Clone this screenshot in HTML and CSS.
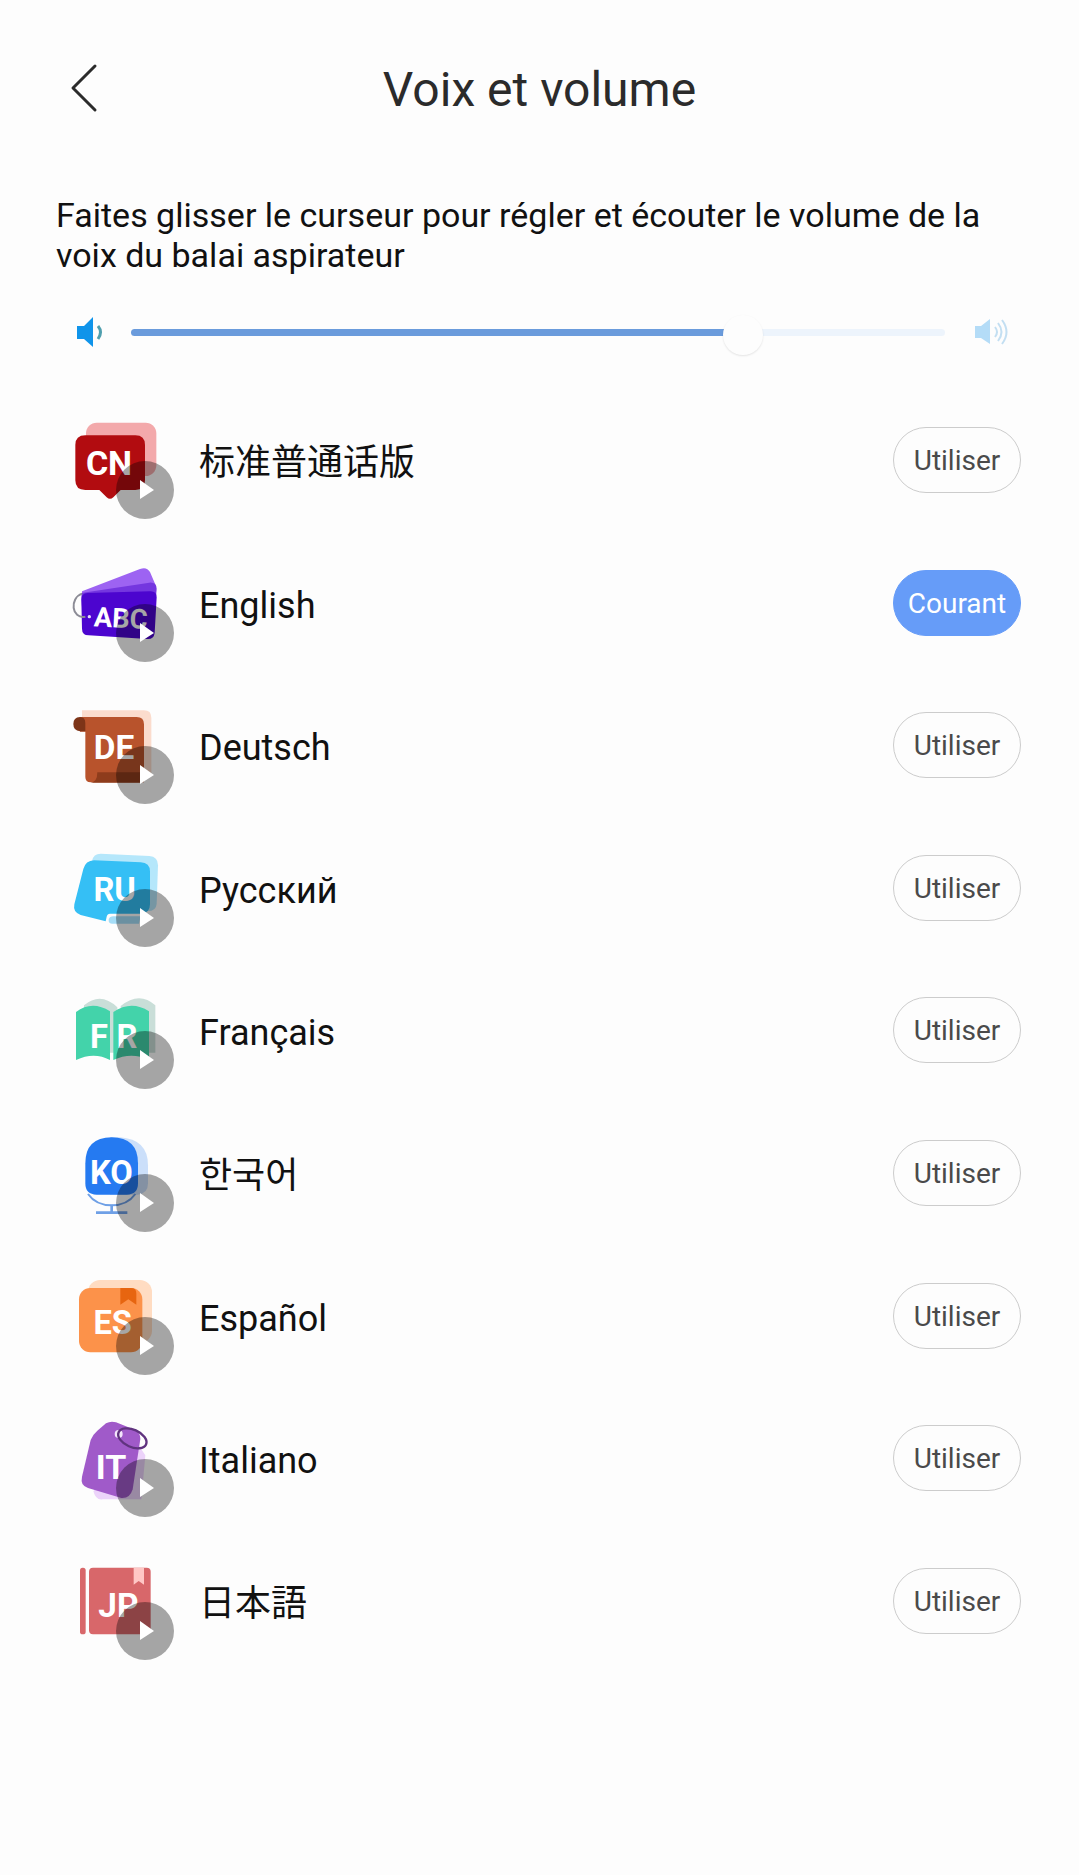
FILE: index.html
```html
<!DOCTYPE html>
<html lang="fr">
<head>
<meta charset="utf-8">
<meta name="viewport" content="width=device-width, initial-scale=1">
<title>Voix et volume</title>
<link rel="stylesheet" href="styles.css">
</head>
<body>
<header class="topbar">
  <button class="back" type="button" aria-label="Retour">
    <svg width="30" height="50" viewBox="0 0 30 50"><path d="M27 3 5 25 27 47" fill="none" stroke="#2b2b2b" stroke-width="3" stroke-linecap="round" stroke-linejoin="round"/></svg>
  </button>
  <h1 class="title">Voix et volume</h1>
</header>
<main>
  <section class="volume">
    <label class="hint" for="volume">Faites glisser le curseur pour régler et écouter le volume de la voix du balai aspirateur</label>
    <div class="slider-row">
      <svg class="speaker" width="28" height="30" viewBox="0 0 28 30"><path d="M1 9h7l9-9v30l-9-8H1z" fill="#0f94ea"/><path d="M22 9q5 6 0 13" fill="none" stroke="#4f9fae" stroke-width="3"/></svg>
      <input class="slider" id="volume" type="range" min="0" max="1000" value="765">
      <svg class="speaker" width="34" height="30" viewBox="0 0 34 30"><path d="M0 9h6l9-7v25l-9-6H0z" fill="#b4dcf7"/><path d="M20 10q4 5 0 10M23 6q7 9 0 18M27 3q9 12 0 24" fill="none" stroke="#c3dff2" stroke-width="2"/></svg>
    </div>
  </section>
  <ul class="voices">
    <li class="voice">
      <div class="art">
        <svg class="picture" viewBox="0 -30 390 360">
          <rect x="78" y="38" width="211" height="160" rx="32" fill="#f3a9ab"/>
          <path d="M76 76H226q29 0 29 29V211q0 29-29 29H182L160 262q-10 9-20 0L118 240H76q-30 0-30-29V105q0-29 30-29Z" fill="#b20c10"/>
          <text class="code" x="147" y="194" font-size="102">CN</text>
        </svg>
        <button class="play" type="button" aria-label="Écouter 标准普通话版"><svg class="play-icon" viewBox="0 0 58 58"><path d="M24 19 38 29 24 38Z"/></svg></button>
      </div>
      <span class="name" lang="zh">标准普通话版</span>
      <button class="use" type="button">Utiliser</button>
    </li>
    <li class="voice">
      <div class="art">
        <svg class="picture" viewBox="0 -37 390 360">
          <path d="M66 108 240 41q20-8 30 9l18 42-10 90-210 0Z" fill="#9d63f2"/>
          <path d="M64 113 268 82q21-2 22 18l-8 100-214 0Z" fill="#7436df"/>
          <path d="M82 113 272 108q18 0 18 18L284 232q-2 20-22 19L86 240q-20-1-20-20L64 132q0-18 18-19Z" fill="#4c05cf"/>
          <path d="M66 115C28 128 34 192 76 184" fill="none" stroke="#8c8c96" stroke-width="6"/>
          <circle cx="88" cy="184" r="5" fill="#e8dcff"/>
          <text class="code" x="182" y="217" font-size="82" transform="rotate(3 182 190)">ABC</text>
        </svg>
        <button class="play" type="button" aria-label="Écouter English"><svg class="play-icon" viewBox="0 0 58 58"><path d="M24 19 38 29 24 38Z"/></svg></button>
      </div>
      <span class="name" lang="en">English</span>
      <button class="use use-current" type="button" aria-pressed="true">Courant</button>
    </li>
    <li class="voice">
      <div class="art">
        <svg class="picture" viewBox="0 -30 390 360">
          <path d="M66 46H252q22 0 22 22V240H90V88H66Z" fill="#fbdccd"/>
          <path d="M60 66H230q22 0 22 22V262H92q-16 0-16-16V110H60Z" fill="#b8532c"/>
          <path d="M60 66q16 0 16 18v25H60q-20-2-20-22t20-21Z" fill="#7d3418"/>
          <path d="M112 232H262q0 30-22 31H92q20-2 20-31Z" fill="#8e3c1c"/>
          <text class="code" x="162" y="191" font-size="100">DE</text>
        </svg>
        <button class="play" type="button" aria-label="Écouter Deutsch"><svg class="play-icon" viewBox="0 0 58 58"><path d="M24 19 38 29 24 38Z"/></svg></button>
      </div>
      <span class="name" lang="de">Deutsch</span>
      <button class="use" type="button">Utiliser</button>
    </li>
    <li class="voice">
      <div class="art">
        <svg class="picture" viewBox="0 -37 390 360">
          <path d="M122 40 268 47q26 2 26 28L290 190q-2 22-26 22L100 190 96 62Q100 40 122 40Z" fill="#b5e7fb"/>
          <path d="M102 60 242 66q28 1 28 28V192q0 28-28 28H150q-8 0-10 9l-3 14L62 224q-24-8-19-32L70 86q7-25 32-26Z" fill="#35bff5"/>
          <path d="M146 238q3-10 14-10h82l-5 22h-80q-12 0-11-12Z" fill="#a5ddf7"/>
          <text class="code" x="164" y="181" font-size="98">RU</text>
        </svg>
        <button class="play" type="button" aria-label="Écouter Русский"><svg class="play-icon" viewBox="0 0 58 58"><path d="M24 19 38 29 24 38Z"/></svg></button>
      </div>
      <span class="name" lang="ru">Русский</span>
      <button class="use" type="button">Utiliser</button>
    </li>
    <li class="voice">
      <div class="art">
        <svg class="picture" viewBox="0 -44 390 360">
          <path d="M72 62q50-42 100 6V204H72ZM182 64q56-46 104-2V204H182Z" fill="#c9ded8"/>
          <path d="M48 82q48-36 102-2V226q-48-26-102 0Z" fill="#43d3aa"/>
          <path d="M160 82q54-36 107-2V226q-52-26-107 0Z" fill="#43d3aa"/>
          <text class="code" x="117" y="189" font-size="98">F</text>
          <text class="code" x="201" y="189" font-size="98">R</text>
        </svg>
        <button class="play" type="button" aria-label="Écouter Français"><svg class="play-icon" viewBox="0 0 58 58"><path d="M24 19 38 29 24 38Z"/></svg></button>
      </div>
      <span class="name" lang="fr">Français</span>
      <button class="use" type="button">Utiliser</button>
    </li>
    <li class="voice">
      <div class="art">
        <svg class="picture" viewBox="0 -37 390 360">
          <path d="M150 36h30q84 6 84 84v54q0 32-32 34H150Z" fill="#cbdffa"/>
          <path d="M76 114q0-77 79-78 79 1 79 78v60q0 34-34 34H110q-34 0-34-34Z" fill="#257af1"/>
          <path d="M84 206q24 34 71 34t71-34" fill="none" stroke="#6fa0e6" stroke-width="6"/>
          <path d="M155 238v24M108 262h94" stroke="#6fa0e6" stroke-width="8"/>
          <text class="code" x="154" y="177" font-size="98">KO</text>
        </svg>
        <button class="play" type="button" aria-label="Écouter 한국어"><svg class="play-icon" viewBox="0 0 58 58"><path d="M24 19 38 29 24 38Z"/></svg></button>
      </div>
      <span class="name" lang="ko">한국어</span>
      <button class="use" type="button">Utiliser</button>
    </li>
    <li class="voice">
      <div class="art">
        <svg class="picture" viewBox="0 -44 390 360">
          <rect x="84" y="28" width="192" height="188" rx="36" fill="#ffdcc2"/>
          <rect x="57" y="52" width="190" height="193" rx="34" fill="#fc924a"/>
          <path d="M181 52h32q16 0 16 16v34l-24-16-24 16Z" fill="#e76510"/>
          <text class="code" x="158" y="190" font-size="98">ES</text>
        </svg>
        <button class="play" type="button" aria-label="Écouter Español"><svg class="play-icon" viewBox="0 0 58 58"><path d="M24 19 38 29 24 38Z"/></svg></button>
      </div>
      <span class="name" lang="es">Español</span>
      <button class="use" type="button">Utiliser</button>
    </li>
    <li class="voice">
      <div class="art">
        <svg class="picture" viewBox="0 -36 390 360">
          <path d="M232 100 256 136 244 268H128q-20 4-28-24Z" fill="#ecd3fa"/>
          <path d="M138 40q14-8 30-3l56 22q18 10 17 28L218 238q-8 28-34 26L84 234q-24-8-18-34L92 90q6-16 20-28Z" fill="#a05ac9"/>
          <circle cx="176" cy="72" r="12" fill="#f3e5fb"/>
          <ellipse cx="217" cy="85" rx="45" ry="26" transform="rotate(24 217 85)" fill="none" stroke="#60337f" stroke-width="7"/>
          <text class="code" x="153" y="206" font-size="102">IT</text>
        </svg>
        <button class="play" type="button" aria-label="Écouter Italiano"><svg class="play-icon" viewBox="0 0 58 58"><path d="M24 19 38 29 24 38Z"/></svg></button>
      </div>
      <span class="name" lang="it">Italiano</span>
      <button class="use" type="button">Utiliser</button>
    </li>
    <li class="voice">
      <div class="art">
        <svg class="picture" viewBox="0 -44 390 360">
          <rect x="60" y="36" width="17" height="200" rx="8" fill="#d8676a"/>
          <rect x="87" y="36" width="185" height="200" rx="12" fill="#d8676a"/>
          <path d="M221 36h31v51l-16-11-15 11Z" fill="#ffc7c5"/>
          <text class="code" x="175" y="185" font-size="100">JP</text>
        </svg>
        <button class="play" type="button" aria-label="Écouter 日本語"><svg class="play-icon" viewBox="0 0 58 58"><path d="M24 19 38 29 24 38Z"/></svg></button>
      </div>
      <span class="name" lang="ja">日本語</span>
      <button class="use" type="button">Utiliser</button>
    </li>
  </ul>
</main>
</body>
</html>
```
FILE: styles.css
```css
* {
  box-sizing: border-box;
}

body {
  margin: 0;
  background: #fdfdfd;
  color: #111;
  font-family: Roboto, "Noto Sans CJK SC", sans-serif;
}

button {
  padding: 0;
  border: 0;
  background: none;
  font: inherit;
  cursor: pointer;
}

svg {
  display: block;
}

.topbar {
  display: grid;
  grid-template-columns: 60px 1fr 60px;
  align-items: center;
  height: 176px;
  padding: 0 56px;
}

.back {
  justify-self: start;
  padding: 0 12px;
}

.title {
  margin: 0;
  padding-top: 4px;
  color: #2b2b2b;
  font-size: 48px;
  font-weight: 400;
  line-height: 56px;
  text-align: center;
}

.volume {
  padding: 19px 56px 0;
}

.hint {
  display: block;
  font-size: 34px;
  line-height: 40px;
}

.slider-row {
  display: flex;
  align-items: center;
  height: 44px;
  margin-top: 35px;
  padding: 0 14px 0 20px;
}

.speaker {
  flex: none;
}

.slider {
  flex: 1;
  min-width: 0;
  height: 44px;
  margin: 0 30px 0 27px;
  appearance: none;
  background: none;
}

.slider::-webkit-slider-runnable-track {
  height: 7px;
  border-radius: 4px;
  background: linear-gradient(to right, #6a9bdc 75%, #edf4fc 75%);
}

.slider::-webkit-slider-thumb {
  width: 40px;
  height: 40px;
  margin-top: -14px;
  appearance: none;
  border-radius: 50%;
  background: #fdfdfd;
  box-shadow: 0 1px 2px rgba(0, 0, 0, 0.1);
}

.voices {
  display: grid;
  grid-auto-rows: 1fr;
  min-height: 1283px;
  margin: 35px 0 0;
  padding: 0 58px 0 60px;
  list-style: none;
}

.voice {
  display: flex;
  align-items: center;
  gap: 9px;
}

.art {
  position: relative;
  flex: none;
  width: 130px;
  height: 120px;
}

.picture {
  width: 130px;
  height: 120px;
}

.code {
  fill: #fff;
  font-family: Roboto, sans-serif;
  font-weight: 700;
  text-anchor: middle;
}

.play {
  position: absolute;
  top: 61px;
  left: 56px;
  width: 58px;
  height: 58px;
  border-radius: 50%;
  background: rgba(0, 0, 0, 0.35);
}

.play-icon {
  fill: #fff;
}

.name {
  flex: 1;
  padding-top: 6px;
  font-size: 36px;
  line-height: 44px;
}

.name:lang(ja) {
  font-family: Roboto, "Noto Sans CJK JP", sans-serif;
}

.name:lang(ko) {
  font-family: Roboto, "Noto Sans CJK KR", sans-serif;
}

.use {
  flex: none;
  width: 128px;
  height: 66px;
  padding-top: 2px;
  border: 1px solid #ccc;
  border-radius: 33px;
  color: #4a4a4a;
  font-size: 28px;
  line-height: 32px;
}

.use-current {
  border-color: #669cf8;
  background: #669cf8;
  color: #fff;
}
```
